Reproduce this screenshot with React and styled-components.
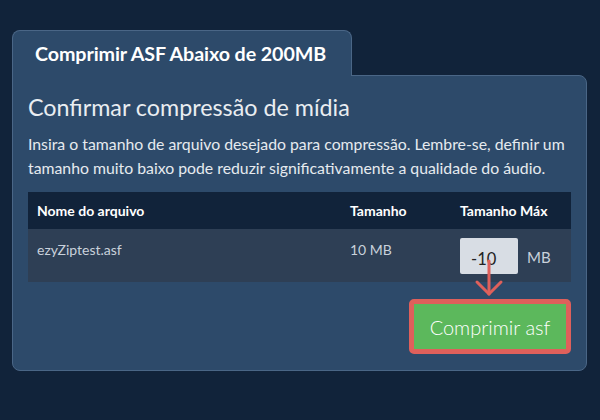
import React from 'react';
import styled, { createGlobalStyle } from 'styled-components';

const Global = createGlobalStyle`
    body {
        margin: 0;
        background: #11233a;
        font-family: Lato, "Open Sans", sans-serif;
    }
`;

const Page = styled.div`
    padding: 30px 13px 0 12px;
    height: 420px;
    box-sizing: border-box;
`;

const Tab = styled.div`
    width: 340px;
    height: 46px;
    box-sizing: border-box;
    display: flex;
    align-items: center;
    padding-left: 22px;
    background: #2d4a6a;
    border: 1px solid #4a6686;
    border-bottom: none;
    border-radius: 8px 8px 0 0;
    color: #fff;
    font-size: 19.7px;
    font-weight: 700;
    letter-spacing: -0.1px;
    position: relative;
    z-index: 1;
    margin-bottom: -1px;
`;

const Panel = styled.div`
    background: #2d4a6a;
    border: 1px solid #4a6686;
    border-radius: 0 8px 8px 8px;
    padding: 14px 15px 17px 15px;
    height: 296px;
    box-sizing: border-box;
`;

const Heading = styled.h2`
    margin: 0;
    font-size: 23.3px;
    font-weight: 400;
    line-height: 34px;
    color: #e9edf1;
`;

const Text = styled.p`
    margin: 8px 0 13px;
    font-size: 15.8px;
    line-height: 23.5px;
    color: #e6eaef;
`;

const Table = styled.div`
    display: grid;
    grid-template-columns: 313px 110px 1fr;
`;

const HeadCell = styled.div`
    background: #11233a;
    color: #fff;
    font-weight: 700;
    font-size: 14px;
    height: 37px;
    display: flex;
    align-items: center;
    padding-left: 9px;
`;

const Cell = styled.div`
    background: #2e3f55;
    color: #c9d1db;
    font-size: 14px;
    height: 53px;
    box-sizing: border-box;
    padding: 12px 0 0 9px;
`;

const SizeCell = styled(Cell)`
    display: flex;
    align-items: flex-start;
    padding-top: 9px;
    gap: 9px;
`;

const InputWrap = styled.div`
    position: relative;
`;

const Input = styled.div`
    width: 58px;
    height: 36px;
    box-sizing: border-box;
    background: #d8dde4;
    border-radius: 2px;
    color: #222;
    font-size: 16.5px;
    padding: 11px 0 0 11px;
`;

const Unit = styled.span`
    font-size: 15px;
    line-height: 38px;
    color: #c9d1db;
`;

const Arrow = styled.svg`
    position: absolute;
    left: 15px;
    top: 23px;
    overflow: visible;
`;

const Actions = styled.div`
    display: flex;
    justify-content: flex-end;
    margin-top: 17px;
`;

const Button = styled.button`
    width: 162px;
    height: 55px;
    background: #5cb85c;
    border: 5px solid #df605b;
    border-radius: 5px;
    color: #fff;
    font-family: Lato, "Open Sans", sans-serif;
    font-size: 20px;
    font-weight: 300;
    padding: 0;
`;

export default function App() {
    return (
        <Page>
            <Global />
            <Tab>Comprimir ASF Abaixo de 200MB</Tab>
            <Panel>
                <Heading>Confirmar compressão de mídia</Heading>
                <Text>
                    Insira o tamanho de arquivo desejado para compressão. Lembre-se, definir um
                    tamanho muito baixo pode reduzir significativamente a qualidade do áudio.
                </Text>
                <Table>
                    <HeadCell>Nome do arquivo</HeadCell>
                    <HeadCell>Tamanho</HeadCell>
                    <HeadCell>Tamanho Máx</HeadCell>
                    <Cell>ezyZiptest.asf</Cell>
                    <Cell>10 MB</Cell>
                    <SizeCell>
                        <InputWrap>
                            <Input>-10</Input>
                            <Arrow width="28" height="36" viewBox="0 0 28 36">
                                <g fill="none" stroke="#df605b" strokeWidth="3" strokeLinecap="round" strokeLinejoin="round">
                                    <path d="M14 0 V33" />
                                    <path d="M2 21 L14 33 L26 21" />
                                </g>
                            </Arrow>
                        </InputWrap>
                        <Unit>MB</Unit>
                    </SizeCell>
                </Table>
                <Actions>
                    <Button>Comprimir asf</Button>
                </Actions>
            </Panel>
        </Page>
    );
}
